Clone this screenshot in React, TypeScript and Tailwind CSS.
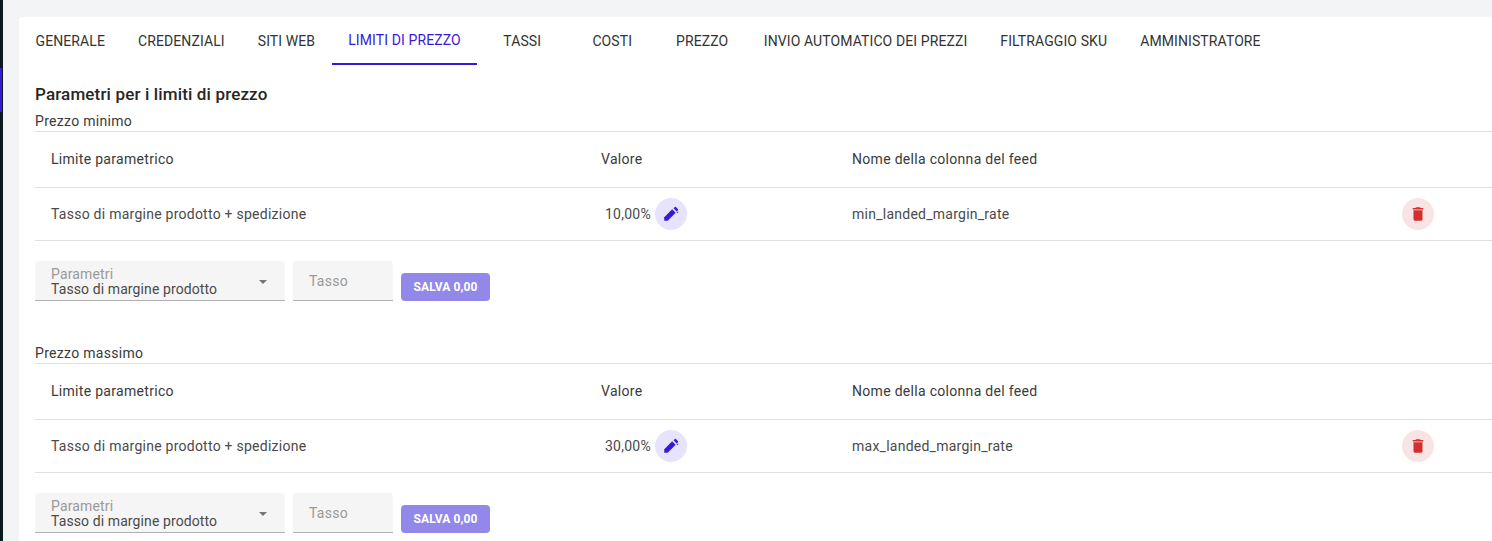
const tabs = [
  "Generale",
  "Credenziali",
  "Siti web",
  "Limiti di prezzo",
  "Tassi",
  "Costi",
  "Prezzo",
  "Invio automatico dei prezzi",
  "Filtraggio SKU",
  "Amministratore",
];

function PriceLimit({ title, value, column }: { title: string; value: string; column: string }) {
  return (
    <div className="flex flex-col">
      <p className="text-[14px] leading-[20px] tracking-[0.3px] text-[#3a3a3a]">{title}</p>
      <div className="border-t border-[#e0e0e0] w-[1457px]">
        <div className="grid grid-cols-[550px_251px_550px_1fr] h-[56px] items-center border-b border-[#e0e0e0] text-[14px] font-normal tracking-[0.3px] text-[#3a3a3a]">
          <div className="pl-4">Limite parametrico</div>
          <div className="pl-4">Valore</div>
          <div className="pl-4">Nome della colonna del feed</div>
          <div />
        </div>
        <div className="grid grid-cols-[550px_251px_550px_1fr] h-[53px] items-center border-b border-[#e0e0e0] text-[14px] tracking-[0.25px] text-[#4a4a4a]">
          <div className="pl-4">Tasso di margine prodotto + spedizione</div>
          <div className="pl-5 flex items-center gap-1">
            <span>{value}</span>
            <button className="w-8 h-8 rounded-full bg-[#e6e3fa] flex items-center justify-center">
              <svg viewBox="0 0 24 24" className="w-[18px] h-[18px] fill-[#3719dc]">
                <path d="M3 21v-4.6L13.6 5.8l4.6 4.6L7.6 21z" />
                <path d="M15.4 4.4l1.7-1.7c.4-.4 1-.4 1.4 0l2.8 2.8c.4.4.4 1 0 1.4l-1.7 1.7z" />
                <path d="M19.4 10.2l1.7-1.7.9.9-1.7 1.7z" />
              </svg>
            </button>
          </div>
          <div className="pl-4">{column}</div>
          <div className="pl-4">
            <button className="w-8 h-8 rounded-full bg-[#f8e4e4] flex items-center justify-center">
              <svg viewBox="0 0 24 24" className="w-[18px] h-[18px] fill-[#d32f2f]">
                <path d="M6 19c0 1.1.9 2 2 2h8c1.1 0 2-.9 2-2V7H6v12zM19 4h-3.5l-1-1h-5l-1 1H5v2h14V4z" />
              </svg>
            </button>
          </div>
        </div>
      </div>
      <div className="flex items-end gap-2 mt-5">
        <div className="w-[250px] h-10 bg-[#f5f5f5] rounded-t border-b border-[#b0b0b0] pl-4 pr-[18px] pt-[2px] flex items-center justify-between">
          <div className="flex flex-col">
            <span className="text-[14px] leading-[14px] tracking-[0.15px] text-[#9a9a9a]">Parametri</span>
            <span className="text-[14px] leading-[16px] tracking-[0.1px] text-[#4a4a4a]">Tasso di margine prodotto</span>
          </div>
          <div className="w-0 h-0 border-x-[4.5px] border-x-transparent border-t-[4px] border-t-[#757575]" />
        </div>
        <div className="w-[100px] h-10 bg-[#f5f5f5] rounded-t border-b border-[#b0b0b0] pl-4 pt-[2px] flex items-center text-[14px] tracking-[0.25px] text-[#9a9a9a]">
          Tasso
        </div>
        <button className="w-[89px] h-7 rounded bg-[#9288ea] text-white text-[12px] font-bold tracking-[0.1px]">
          SALVA 0,00
        </button>
      </div>
    </div>
  );
}

export default function App() {
  return (
    <div className="h-[541px] w-[1492px] overflow-hidden flex bg-[#f3f4f6] font-['Roboto',sans-serif]">
      <div className="w-[3px] shrink-0 bg-[#0b1a1f] pt-[68px]">
        <div className="w-[2px] h-[44px] bg-[#3719dc]" />
      </div>
      <div className="flex-1 min-w-0 pl-4 pt-[17px]">
        <div className="bg-white rounded-tl h-full overflow-hidden">
          <div className="flex h-12">
            {tabs.map((t, i) => (
              <div
                key={t}
                className={
                  i === 3
                    ? "min-w-[90px] px-[16.5px] flex items-center justify-center text-[14px] font-normal uppercase tracking-[0.1px] text-[#3719dc] border-b-2 border-[#3719dc]"
                    : "min-w-[90px] px-[16.5px] flex items-center justify-center text-[14px] font-normal uppercase tracking-[0.1px] text-[#333333]"
                }
              >
                {t}
              </div>
            ))}
          </div>
          <div className="pl-4 pt-[17px]">
            <h2 className="text-[17px] leading-[24px] font-medium tracking-[0.15px] text-[#262626] mb-[5px]">
              Parametri per i limiti di prezzo
            </h2>
            <div className="flex flex-col gap-[42px]">
              <PriceLimit title="Prezzo minimo" value="10,00%" column="min_landed_margin_rate" />
              <PriceLimit title="Prezzo massimo" value="30,00%" column="max_landed_margin_rate" />
            </div>
          </div>
        </div>
      </div>
    </div>
  );
}
